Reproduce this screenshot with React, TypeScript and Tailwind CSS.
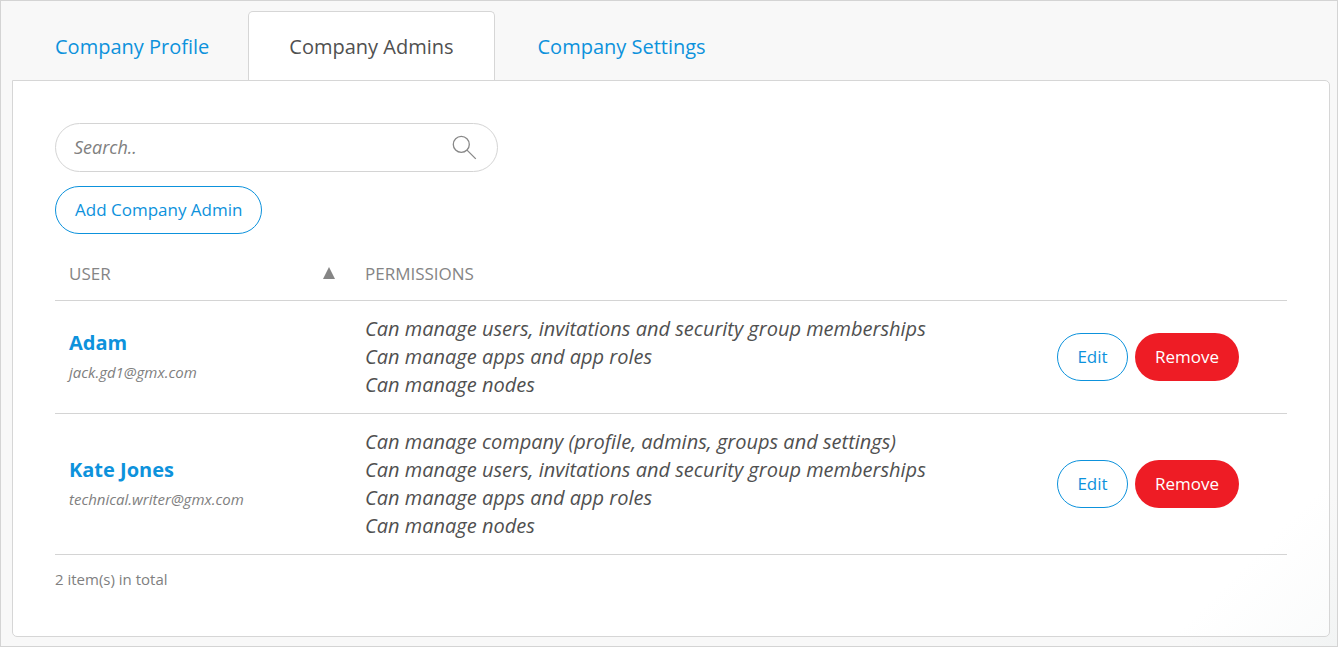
import React from "react";

const tabs = [
  { label: "Company Profile", href: "#profile", active: false },
  { label: "Company Admins", href: "#admins", active: true },
  { label: "Company Settings", href: "#settings", active: false },
];

const admins = [
  {
    name: "Adam",
    email: "jack.gd1@gmx.com",
    permissions: [
      "Can manage users, invitations and security group memberships",
      "Can manage apps and app roles",
      "Can manage nodes",
    ],
  },
  {
    name: "Kate Jones",
    email: "technical.writer@gmx.com",
    permissions: [
      "Can manage company (profile, admins, groups and settings)",
      "Can manage users, invitations and security group memberships",
      "Can manage apps and app roles",
      "Can manage nodes",
    ],
  },
];

function SearchIcon() {
  return (
    <svg width="26" height="26" viewBox="0 0 26 26" fill="none" stroke="#888" strokeWidth="1.3" aria-hidden="true">
      <circle cx="10.3" cy="9.4" r="8" />
      <path d="M16 15.1L24.8 23.9" />
    </svg>
  );
}

export default function App() {
  return (
    <div className="min-h-screen border border-[#d4d4d4] bg-[#f8f8f8] bg-[linear-gradient(315deg,#f2f4f4_0px,#f8f8f8_110px)] pt-[10px] pr-[7px] pb-2 pl-[11px] font-['Open_Sans',sans-serif] text-[#505050]">
      <nav className="flex text-[20px] leading-7" aria-label="Company">
        {tabs.map((tab) => (
          <a
            key={tab.label}
            href={tab.href}
            aria-current={tab.active ? "page" : undefined}
            className={
              tab.active
                ? "rounded-t-[5px] border border-b-0 border-[#d6d6d6] bg-white px-10 pt-[21px] pb-[19px]"
                : "pt-[22px] pr-[39px] pb-[19px] pl-[43px] text-[#0d92dc]"
            }
          >
            {tab.label}
          </a>
        ))}
      </nav>
      <main className="rounded-[5px] rounded-tl-none border border-[#d6d6d6] bg-white bg-[linear-gradient(315deg,#fafbfb_0px,#ffffff_110px)] px-[42px] pt-[42px] pb-[45px]">
        <div className="flex h-[49px] w-[443px] max-w-full items-center rounded-full border border-[#d4d4d4] pr-5 pl-[18px]">
          <input
            type="search"
            aria-label="Search"
            placeholder="Search.."
            className="min-w-0 flex-1 text-[18px] italic outline-none placeholder:text-[#808080]"
          />
          <button type="button" aria-label="Search">
            <SearchIcon />
          </button>
        </div>
        <button type="button" className="mt-[14px] h-12 rounded-full border border-[#0d92dc] px-[19px] text-[17px] text-[#0d92dc]">
          Add Company Admin
        </button>
        <table className="mt-[13px] w-full table-fixed border-collapse text-left">
          <colgroup>
            <col className="w-[296px]" />
            <col />
            <col className="w-[230px]" />
          </colgroup>
          <thead>
            <tr className="h-[53px] border-b border-[#d4d4d4] text-[17px] text-[#858585]">
              <th className="pr-4 pl-[14px] font-normal">
                <div className="flex items-center justify-between">
                  USER
                  <svg width="12" height="12" viewBox="0 0 12 12" fill="#858585" aria-hidden="true">
                    <path d="M6 0L12 12H0Z" />
                  </svg>
                </div>
              </th>
              <th className="pl-[14px] font-normal">PERMISSIONS</th>
              <th aria-label="Actions" />
            </tr>
          </thead>
          <tbody>
            {admins.map((admin) => (
              <tr key={admin.name} className="border-b border-[#d4d4d4]">
                <td className="pl-[14px]">
                  <a href="#user" className="block text-[20px] leading-7 font-bold text-[#0d92dc]">
                    {admin.name}
                  </a>
                  <div className="mt-[3px] text-[15px] leading-6 text-[#808080] italic">{admin.email}</div>
                </td>
                <td className="py-[14px] pl-[14px] text-[20px] leading-7 italic">
                  <ul>
                    {admin.permissions.map((permission) => (
                      <li key={permission}>{permission}</li>
                    ))}
                  </ul>
                </td>
                <td>
                  <div className="flex gap-[7px] text-[17px]">
                    <button type="button" className="h-12 w-[71px] rounded-full border border-[#0d92dc] text-[#0d92dc]">
                      Edit
                    </button>
                    <button type="button" className="h-12 w-[104px] rounded-full bg-[#ee1c25] text-white">
                      Remove
                    </button>
                  </div>
                </td>
              </tr>
            ))}
          </tbody>
        </table>
        <p className="mt-3 text-[15px] leading-6 text-[#808080]">2 item(s) in total</p>
      </main>
    </div>
  );
}
